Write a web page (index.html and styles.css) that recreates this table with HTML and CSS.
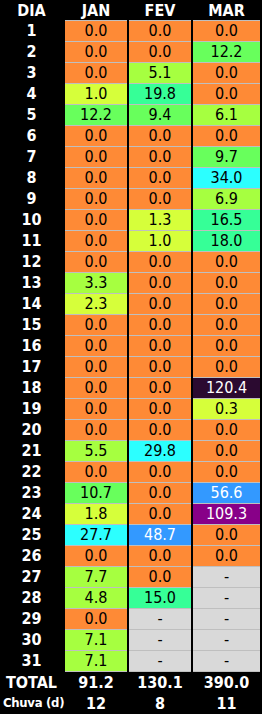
FILE: index.html
```html
<!DOCTYPE html>
<html lang="pt">
<head>
<meta charset="utf-8">
<title>Chuva</title>
<link rel="stylesheet" href="styles.css">
</head>
<body>
<div class="sheet">
  <div class="hd">DIA</div><div class="hd">JAN</div><div class="hd">FEV</div><div class="hd">MAR</div>

  <div class="day">1</div><div class="v c0">0.0</div><div class="v c0">0.0</div><div class="v c0">0.0</div>
  <div class="day">2</div><div class="v c0">0.0</div><div class="v c0">0.0</div><div class="v c3">12.2</div>
  <div class="day">3</div><div class="v c0">0.0</div><div class="v c2">5.1</div><div class="v c0">0.0</div>
  <div class="day">4</div><div class="v c1">1.0</div><div class="v c4">19.8</div><div class="v c0">0.0</div>
  <div class="day">5</div><div class="v c3">12.2</div><div class="v c3">9.4</div><div class="v c2">6.1</div>
  <div class="day">6</div><div class="v c0">0.0</div><div class="v c0">0.0</div><div class="v c0">0.0</div>
  <div class="day">7</div><div class="v c0">0.0</div><div class="v c0">0.0</div><div class="v c3">9.7</div>
  <div class="day">8</div><div class="v c0">0.0</div><div class="v c0">0.0</div><div class="v c5">34.0</div>
  <div class="day">9</div><div class="v c0">0.0</div><div class="v c0">0.0</div><div class="v c2">6.9</div>
  <div class="day">10</div><div class="v c0">0.0</div><div class="v c1">1.3</div><div class="v c4">16.5</div>
  <div class="day">11</div><div class="v c0">0.0</div><div class="v c1">1.0</div><div class="v c4">18.0</div>
  <div class="day">12</div><div class="v c0">0.0</div><div class="v c0">0.0</div><div class="v c0">0.0</div>
  <div class="day">13</div><div class="v c2">3.3</div><div class="v c0">0.0</div><div class="v c0">0.0</div>
  <div class="day">14</div><div class="v c1">2.3</div><div class="v c0">0.0</div><div class="v c0">0.0</div>
  <div class="day">15</div><div class="v c0">0.0</div><div class="v c0">0.0</div><div class="v c0">0.0</div>
  <div class="day">16</div><div class="v c0">0.0</div><div class="v c0">0.0</div><div class="v c0">0.0</div>
  <div class="day">17</div><div class="v c0">0.0</div><div class="v c0">0.0</div><div class="v c0">0.0</div>
  <div class="day">18</div><div class="v c0">0.0</div><div class="v c0">0.0</div><div class="v c8">120.4</div>
  <div class="day">19</div><div class="v c0">0.0</div><div class="v c0">0.0</div><div class="v c1">0.3</div>
  <div class="day">20</div><div class="v c0">0.0</div><div class="v c0">0.0</div><div class="v c0">0.0</div>
  <div class="day">21</div><div class="v c2">5.5</div><div class="v c5">29.8</div><div class="v c0">0.0</div>
  <div class="day">22</div><div class="v c0">0.0</div><div class="v c0">0.0</div><div class="v c0">0.0</div>
  <div class="day">23</div><div class="v c3">10.7</div><div class="v c0">0.0</div><div class="v c6">56.6</div>
  <div class="day">24</div><div class="v c1">1.8</div><div class="v c0">0.0</div><div class="v c7">109.3</div>
  <div class="day">25</div><div class="v c5">27.7</div><div class="v c6">48.7</div><div class="v c0">0.0</div>
  <div class="day">26</div><div class="v c0">0.0</div><div class="v c0">0.0</div><div class="v c0">0.0</div>
  <div class="day">27</div><div class="v c2">7.7</div><div class="v c0">0.0</div><div class="v na">-</div>
  <div class="day">28</div><div class="v c2">4.8</div><div class="v c4">15.0</div><div class="v na">-</div>
  <div class="day">29</div><div class="v c0">0.0</div><div class="v na">-</div><div class="v na">-</div>
  <div class="day">30</div><div class="v c2">7.1</div><div class="v na">-</div><div class="v na">-</div>
  <div class="day last">31</div><div class="v c2 last">7.1</div><div class="v na last">-</div><div class="v na last">-</div>

  <div class="tot">TOTAL</div><div class="tot">91.2</div><div class="tot">130.1</div><div class="tot">390.0</div>
  <div class="tot small">Chuva (d)</div><div class="tot">12</div><div class="tot">8</div><div class="tot">11</div>
</div>
</body>
</html>
```

FILE: styles.css
```css
html, body {
  margin: 0;
  padding: 0;
  background: #000;
}

body {
  width: 262px;
  height: 714px;
  overflow: hidden;
}

.sheet {
  display: grid;
  grid-template-columns: 63px 62px 62px 67px;
  column-gap: 2px;
  font-family: "DejaVu Sans Condensed", "DejaVu Sans", sans-serif;
  font-stretch: condensed;
}

.hd {
  height: 20px;
  line-height: 21px;
  text-align: center;
  color: #fff;
  font-weight: bold;
  font-size: 16px;
}

.day {
  height: 20px;
  line-height: 20px;
  border-top: 1px solid #000;
  text-align: center;
  color: #fff;
  font-weight: bold;
  font-size: 16px;
}

.v {
  height: 20px;
  line-height: 20px;
  border-top: 1px solid #bfbfbf;
  text-align: center;
  color: #000;
  font-size: 16px;
}

.day.last { border-bottom: 1px solid #000; }
.v.last { border-bottom: 1px solid #bfbfbf; }

.tot {
  height: 21px;
  line-height: 21px;
  text-align: center;
  color: #fff;
  font-weight: bold;
  font-size: 16px;
  white-space: nowrap;
}

.tot.small {
  font-size: 13px;
  letter-spacing: -0.3px;
  padding-left: 3px;
  line-height: 20px;
}

.c0 { background: #fe8a36; }
.c1 { background: #d6ff3a; }
.c2 { background: #a6ff40; }
.c3 { background: #68ff5c; }
.c4 { background: #36ff97; }
.c5 { background: #2cffff; }
.c6 { background: #3399ff; color: #fff; }
.c7 { background: #880088; color: #fff; }
.c8 { background: #2b0a30; color: #fff; }
.na { background: #d9d9d9; }
```
